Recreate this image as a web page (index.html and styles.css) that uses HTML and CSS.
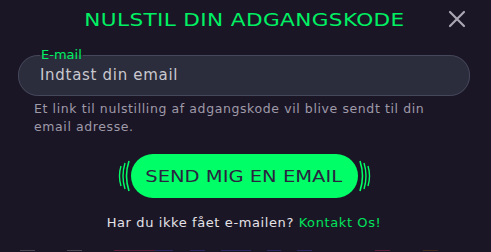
FILE: index.html
```html
<!DOCTYPE html>
<html lang="da">
<head>
    <meta charset="UTF-8">
    <meta name="viewport" content="width=device-width, initial-scale=1.0">
    <title>Nulstil din adgangskode</title>
    <link rel="stylesheet" href="styles.css">
</head>
<body>
    <div class="reset-modal">
        <div class="modal-header">
            <span></span>
            <h1 class="modal-title"><span class="wide">NULSTIL DIN ADGANGSKODE</span></h1>
            <button class="close-btn" aria-label="Luk">
                <svg width="18" height="18" viewBox="0 0 18 18">
                    <path d="M2 2 L16 16 M16 2 L2 16" stroke="#aaa6b2" stroke-width="2.2" stroke-linecap="round"/>
                </svg>
            </button>
        </div>

        <fieldset class="email-field">
            <legend>E-mail</legend>
            <input type="email" placeholder="Indtast din email">
        </fieldset>

        <p class="helper-text">Et link til nulstilling af adgangskode vil blive sendt til din email adresse.</p>

        <div class="send-row">
            <svg class="waves" width="12" height="32" viewBox="0 0 12 32">
                <path d="M3 6 Q0 16 3 26" stroke="#00ff66" stroke-width="1.4" fill="none"/>
                <path d="M7 3 Q3 16 7 29" stroke="#00ff66" stroke-width="1.4" fill="none"/>
                <path d="M11 1 Q6 16 11 31" stroke="#00ff66" stroke-width="1.6" fill="none"/>
            </svg>
            <button class="send-btn"><span class="wide">SEND MIG EN EMAIL</span></button>
            <svg class="waves" width="12" height="32" viewBox="0 0 12 32">
                <path d="M1 1 Q6 16 1 31" stroke="#00ff66" stroke-width="1.6" fill="none"/>
                <path d="M5 3 Q9 16 5 29" stroke="#00ff66" stroke-width="1.4" fill="none"/>
                <path d="M9 6 Q12 16 9 26" stroke="#00ff66" stroke-width="1.4" fill="none"/>
            </svg>
        </div>

        <p class="footer-text">Har du ikke fået e-mailen? <a href="#" class="contact-link">Kontakt Os!</a></p>

        <!-- edge of the page behind the modal -->
        <div class="behind-strip">
            <span class="strip grey"></span>
            <span class="strip grey"></span>
            <span class="strip red-blue"></span>
            <span class="strip blue near"></span>
            <span class="strip blue long near"></span>
            <span class="strip blue near"></span>
            <span class="strip blue"></span>
            <span class="strip red far"></span>
            <span class="strip brown"></span>
        </div>
    </div>
</body>
</html>
```

FILE: styles.css
```css
html, body {
    margin: 0;
    padding: 0;
    background: #1b1626;
}

.reset-modal {
    width: 491px;
    height: 252px;
    box-sizing: border-box;
    padding: 0 21px 0 18px;
    font-family: 'DejaVu Sans', sans-serif;
    color: white;
    overflow: hidden;
}

/* the original font is an extended grotesque, so stretch the headings a bit */
.wide {
    display: inline-block;
    transform: scaleX(1.2);
}

.modal-header {
    display: grid;
    grid-template-columns: 1fr auto 1fr;
    align-items: center;
    height: 38px;
}

.modal-title {
    margin: 0;
    font-size: 18px;
    font-weight: normal;
    color: #00f063;
    letter-spacing: 0.3px;
    white-space: nowrap;
}

.close-btn {
    justify-self: end;
    background: none;
    border: none;
    padding: 0;
    margin-right: 4px;
    width: 18px;
    height: 18px;
    cursor: pointer;
}

.email-field {
    margin: 9px 0 0;
    padding: 0 21px;
    height: 49px;
    box-sizing: border-box;
    border: 1px solid #45475a;
    border-radius: 20px;
    background: #2b2c3c;
    display: flex;
    align-items: center;
}

.email-field legend {
    font-size: 13px;
    color: #00f063;
    padding: 0 1px;
    line-height: 16px;
}

.email-field input {
    background: none;
    border: none;
    outline: none;
    width: 100%;
    margin-top: -8px;
    font-family: 'DejaVu Sans', sans-serif;
    font-size: 15px;
    letter-spacing: 0.7px;
    color: #c9c8cf;
    padding: 0;
}

.email-field input::placeholder {
    color: #c9c8cf;
}

.helper-text {
    margin: 4px 36px 0 16px;
    font-size: 12.5px;
    line-height: 18px;
    letter-spacing: 0.6px;
    color: #9f9aa8;
}

.send-row {
    display: flex;
    justify-content: center;
    align-items: center;
    gap: 1px;
    margin-top: 18px;
}

.send-btn {
    width: 227px;
    height: 44px;
    border: none;
    border-radius: 22px;
    background: #00ff66;
    color: #2a2440;
    font-family: 'DejaVu Sans', sans-serif;
    font-size: 16px;
    cursor: pointer;
    padding: 0;
}

.send-btn .wide {
    transform: scaleX(1.22);
}

.footer-text {
    margin: 17px 0 0;
    text-align: center;
    font-size: 13px;
    letter-spacing: 0.6px;
    color: #e4e2e8;
}

.contact-link {
    color: #00e35c;
    text-decoration: none;
}

.behind-strip {
    display: flex;
    margin: 20px 0 0 2px;
}

.strip {
    height: 1px;
    width: 16px;
    margin-right: 32px;
}

.strip.near { margin-right: 16px; }
.strip.far { margin-right: 33px; }
.strip.long { width: 32px; }

.strip.grey { background: #4a4750; }
.strip.red-blue {
    width: 64px;
    margin-right: 17px;
    background: linear-gradient(90deg, #5c1d3a 70%, #2a2660 70%);
}
.strip.blue { background: #2a2660; margin-right: 63px; }
.strip.blue.near { margin-right: 16px; }
.strip.red { background: #5c1d3a; }
.strip.brown { background: #3f2a1c; }
```
